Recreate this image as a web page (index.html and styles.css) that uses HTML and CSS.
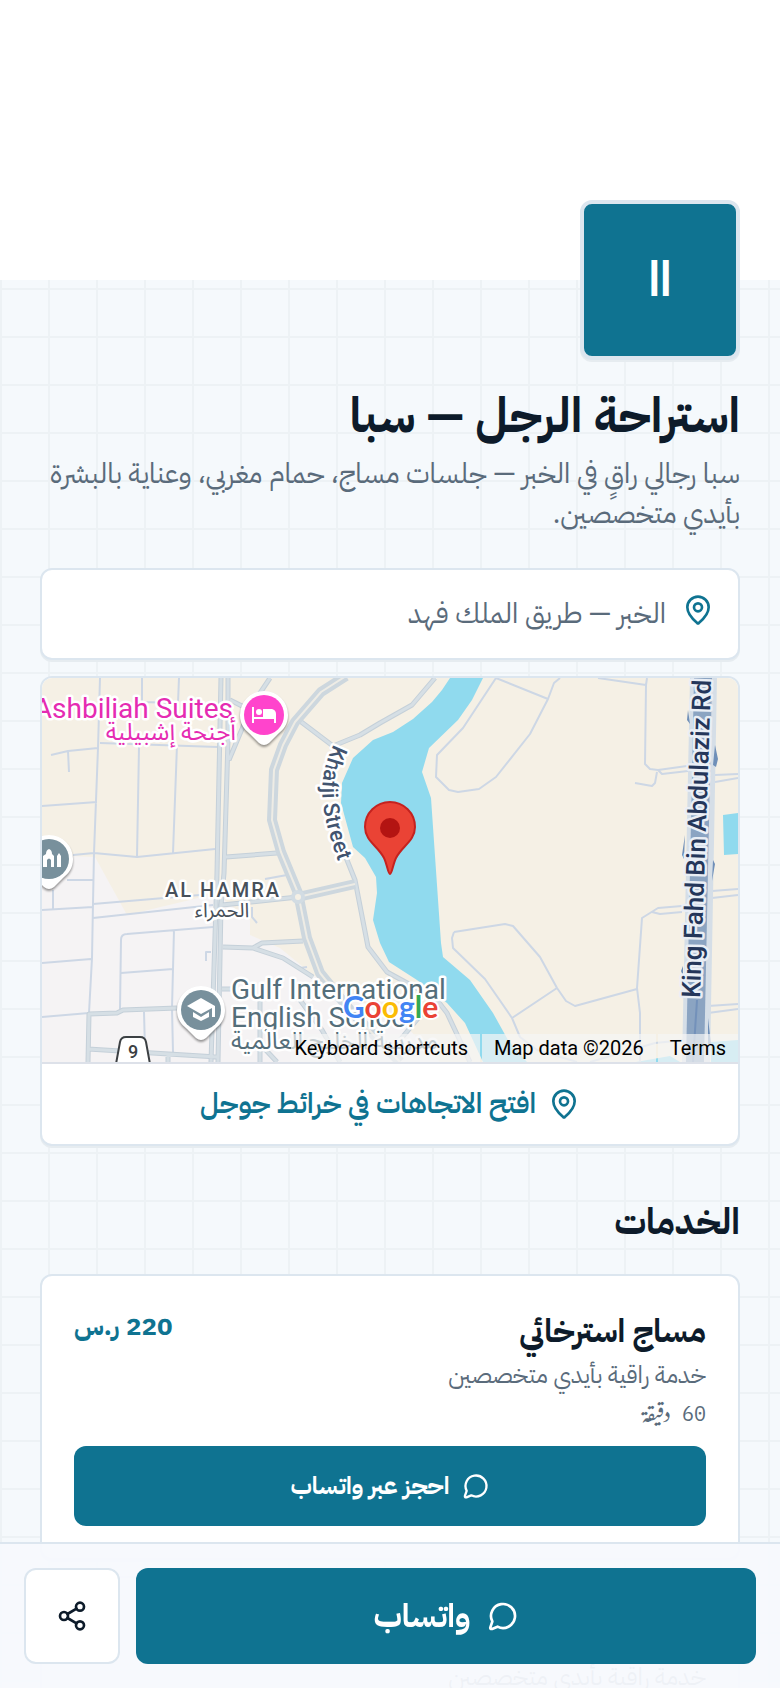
FILE: index.html
```html
<!DOCTYPE html>
<html lang="ar" dir="rtl">
<head>
    <meta charset="UTF-8">
    <meta name="viewport" content="width=device-width, initial-scale=1.0">
    <title>استراحة الرجل — سبا</title>
    <link rel="stylesheet" href="styles.css">
</head>
<body>
    <svg class="icon-defs" width="0" height="0" aria-hidden="true">
        <symbol id="icon-pin" viewBox="0 0 24 24">
            <path d="M20 10c0 5-5.500 10.200-7.400 11.800a1 1 0 0 1-1.200 0C9.500 20.200 4 15 4 10a8 8 0 0 1 16 0"/>
            <circle cx="12" cy="10" r="3"/>
        </symbol>
        <symbol id="icon-chat" viewBox="0 0 24 24">
            <path d="M7.900 20A9 9 0 1 0 4 16.100L2.500 20.500Q2.200 22 3.800 21.700Z"/>
        </symbol>
        <symbol id="icon-share" viewBox="0 0 24 24">
            <circle cx="18" cy="5" r="3"/>
            <circle cx="6" cy="12" r="3"/>
            <circle cx="18" cy="19" r="3"/>
            <path d="M8.600 13.500l6.800 4M15.400 6.500l-6.800 4"/>
        </symbol>
    </svg>

    <div class="cover"></div>
    <main class="content">
        <div class="logo">اا</div>
        <h1>استراحة الرجل — سبا</h1>
        <p class="about">سبا رجالي راقٍ في الخبر — جلسات مساج، حمام مغربي، وعناية بالبشرة بأيدي متخصصين.</p>

        <div class="card address">
            <svg class="icon"><use href="#icon-pin"/></svg>
            <span>الخبر — طريق الملك فهد</span>
        </div>

        <div class="card map-card">
            <div class="map">
                <svg class="map-canvas" viewBox="42 678 696 384" preserveAspectRatio="xMidYMid slice">
                    <defs>
                        <path id="khafji" d="M334 744C315 782 320 814 343 874"/>
                        <path id="marker" d="M0-24a24 24 0 0 1 24 24c0 9-4 14-10 19L5 28q-5 4-10 0l-9-9c-6-5-10-10-10-19A24 24 0 0 1 0-24z"/>
                    </defs>
                    <rect x="42" y="678" width="696" height="384" fill="#f5f0e5"/>
                    <path fill="#f5f3f4" d="M42 855L95 857 127 915 190 900 215 893 250 920V935L280 948 313 975 340 992 400 1020 440 1062H42z"/>

                    <g fill="#90daee">
                        <path d="M450 678L442 690 432 702 413 719 393 732 373 740 353 758 342 783 341 803 353 847 365 858 376 877 377 893 373 920 380 943 389 962 417 980 447 1003 465 1023 483 1062H527L508 1040 493 1013 470 980 443 957 441 943 431 798 422 772 429 748 458 720 472 700 483 678z"/>
                        <path d="M723 815L738 813V854L724 855zM636 1062L670 1056 680 1062zM711 1042L738 1040V1062H711z"/>
                    </g>

                    <g class="street">
                        <path d="M100 678L98 748 94 853 93 903 92 958 89 1013M142 678V702L178 703 179 678M51 755L68 751 98 748M68 751L69 772M100 743L218 747M139 747L137 857M177 745L173 853M42 806L97 802M73 855L94 853 137 857 215 849M67 880H93M53 890V909M42 910L93 907M93 904L200 895M93 918L213 905M42 963L91 959M42 1017L89 1013M120 1009L121 940Q121 934 127 934L213 927M121 973L173 969M174 930L172 1008 173 1052M144 1012L145 1050M211 952H206V961M265 879L287 875M252 907V917L257 923M307 967L300 968"/>
                        <path d="M496 678L463 728 437 755 436 777 449 790 458 792 479 789 496 777 530 734 548 699 554 683 560 678M496 678L548 699M598 678L646 685M647 678L646 685 645 764 650 769 658 770 662 774 688 771M658 770L687 766M657 772L655 783 652 786 635 783M715 775L738 774M715 782L738 778M712 891L738 889M712 898L738 895M708 1006L738 1004M708 1013L738 1009"/>
                        <path d="M454 932L505 924 513 926 540 957 557 988 566 1001 575 1006 637 989M454 932L452 938 453 948 485 979 512 1018 520 1037 537 1050 577 1062M512 1018L557 988M682 906L658 908 642 918 637 988 640 1013V1062M652 912L660 914 682 912M590 1062L655 1043 685 1040"/>
                    </g>

                    <g class="road-edge">
                        <path d="M221 678L217 873 216 905 211 1062M228 678V740L224 873 221 905 218 1062M270 678L252 705 229 760M230 700L242 706M300 721L333 746L360 735 380 723 412 705 435 678M226 857L277 853M298 897L222 905M345 855L355 880 368 947 387 972 420 990 437 1000 447 1013 470 1062M223 947L253 948 262 943 303 941M253 948L283 958 313 977M222 989H232M88 1062L89 1014 117 1013 123 1010 177 1008M88 1049L217 1057M168 1054V1062M300 1000L322 1030 340 1062M400 1040L425 1010M260 1000V1062M262 1046L277 1062"/>
                    </g>
                    <g class="road">
                        <path d="M221 678L217 873 216 905 211 1062M228 678V740L224 873 221 905 218 1062M270 678L252 705 229 760M230 700L242 706M300 721L333 746L360 735 380 723 412 705 435 678M226 857L277 853M298 897L222 905M345 855L355 880 368 947 387 972 420 990 437 1000 447 1013 470 1062M223 947L253 948 262 943 303 941M253 948L283 958 313 977M222 989H232M88 1062L89 1014 117 1013 123 1010 177 1008M88 1049L217 1057M168 1054V1062M300 1000L322 1030 340 1062M400 1040L425 1010M260 1000V1062M262 1046L277 1062"/>
                    </g>
                    <path class="avenue" d="M346 676L321 692 295 722 283 745 274 770 272 820 281 852 298 893 307 938 320 973 350 1010 400 1062M298 897L355 884"/>
                    <path class="avenue-line" d="M346 676L321 692 295 722 283 745 274 770 272 820 281 852 298 893 307 938 320 973 350 1010 400 1062M298 897L355 884"/>
                    <circle cx="298" cy="897" r="5" fill="#f5f0e5" stroke="#d2dce3" stroke-width="4"/>

                    <path d="M690 678H717L710 1062H682z" fill="#d5dee7"/>
                    <path d="M694 678H712L704 1062H686z" fill="#8ba4c2"/>
                    <path d="M688 710l2 14-3-4zM715 745l3 14-2 8-3-2zM685 835l-3 20 2 4zM713 860l2 4-3 17zM683 966l-2 5 2 5zM708 1018l3 26h-3z" fill="#6f8fb8"/>
                    <path d="M697 1000L693 1062" stroke="#7391ba" stroke-width="2"/>

                    <g class="shield">
                        <path d="M116 1064L120 1042Q121 1037 126 1037H140Q145 1037 146 1042L150 1064z"/>
                        <text x="133" y="1058">9</text>
                    </g>

                    <g class="marker pink" transform="translate(264 715)">
                        <use href="#marker"/>
                        <circle r="20"/>
                        <path d="M-12-8h2V2H-1V-6H8q4 1 4 5V8h-2V4h-20v4h-2z" fill="#fff"/>
                        <circle class="dot" cx="-5" cy="-3" r="3"/>
                    </g>
                    <g class="marker" transform="translate(49 859)">
                        <use href="#marker"/>
                        <circle r="20"/>
                        <path d="M-6 8V-3l3-2q0-4 3-5 3 1 3 5l2 2V8H2V1q-2-3-4 0v7zM8 8V-3l2-3 2 3V8z" fill="#fff"/>
                    </g>
                    <g class="marker" transform="translate(201 1010)">
                        <use href="#marker"/>
                        <circle r="20"/>
                        <path d="M0-12l14 8V7h-3V-2L0 4-14-4zM-8 2L0 7 8 2V7L0 11-8 7z" fill="#fff"/>
                    </g>

                    <g class="label place">
                        <text class="pink-text" x="233" y="718" text-anchor="end">Ashbiliah Suites</text>
                        <text class="pink-text small" x="236" y="740" text-anchor="end">أجنحة إشبيلية</text>
                        <text x="231" y="999">Gulf International</text>
                        <text x="231" y="1027">English School</text>
                        <text class="small gray-text" x="231" y="1049">مدرسة الخليج العالمية</text>
                    </g>
                    <g class="label area" text-anchor="middle">
                        <text class="caps" x="223" y="897">AL HAMRA</text>
                        <text class="sub" x="222" y="917">الحمراء</text>
                    </g>
                    <text class="label street-name"><textPath href="#khafji">Khafji Street</textPath></text>
                    <text class="label highway" transform="translate(700 998) rotate(-88)">King Fahd Bin Abdulaziz Rd</text>

                    <path d="M390 874C388 874 387 864 384 858 378 846 365 841 365 827A25 25 0 0 1 415 827C415 841 402 846 396 858 393 864 392 874 390 874z" fill="#ea4335" stroke="#c5221f" stroke-width="2"/>
                    <circle cx="390" cy="828" r="10" fill="#b31412"/>

                    <text class="google" x="343" y="1018"><tspan fill="#4285f4">G</tspan><tspan fill="#ea4335">o</tspan><tspan fill="#fbbc04">o</tspan><tspan fill="#4285f4">g</tspan><tspan fill="#34a853">l</tspan><tspan fill="#ea4335">e</tspan></text>
                </svg>
                <div class="map-footer">
                    <button type="button">Keyboard shortcuts</button>
                    <span>Map data ©2026</span>
                    <a href="#">Terms</a>
                </div>
            </div>
            <a class="directions" href="#">
                <svg class="icon"><use href="#icon-pin"/></svg>
                <span>افتح الاتجاهات في خرائط جوجل</span>
            </a>
        </div>

        <h2>الخدمات</h2>
        <div class="services">
            <article class="card service">
                <div class="service-head">
                    <h3>مساج استرخائي</h3>
                    <span class="price">220 ر.س</span>
                </div>
                <p class="service-text">خدمة راقية بأيدي متخصصين</p>
                <p class="duration">60 دقيقة</p>
                <button type="button" class="book">
                    <svg class="icon"><use href="#icon-chat"/></svg>
                    <span>احجز عبر واتساب</span>
                </button>
            </article>
            <article class="card service">
                <p class="service-text">خدمة راقية بأيدي متخصصين</p>
            </article>
        </div>
    </main>

    <div class="bottom-bar">
        <button type="button" class="whatsapp">
            <svg class="icon"><use href="#icon-chat"/></svg>
            <span>واتساب</span>
        </button>
        <button type="button" class="share" aria-label="مشاركة">
            <svg class="icon"><use href="#icon-share"/></svg>
        </button>
    </div>
</body>
</html>
```
FILE: styles.css
```css
* {
    box-sizing: border-box;
}
body {
    margin: 0;
    padding-bottom: 146px;
    font-family: "IBM Plex Sans Arabic", "Noto Sans Arabic", sans-serif;
    color: #0d1b2a;
    background-color: #f5f9fc;
    background-image:
        linear-gradient(to right, #edf2f5 2px, transparent 2px),
        linear-gradient(to bottom, #edf2f5 2px, transparent 2px);
    background-size: 48px 48px;
}
h1, h2, h3, p {
    margin: 0;
}
button {
    font-family: inherit;
    cursor: pointer;
}
a {
    text-decoration: none;
}
.icon-defs {
    position: absolute;
}
.icon {
    flex: none;
    width: 32px;
    height: 32px;
    fill: none;
    stroke: currentColor;
    stroke-width: 2;
    stroke-linecap: round;
    stroke-linejoin: round;
}
.cover {
    height: 280px;
    background: #fff;
}
.content {
    padding: 0 40px;
}
.logo {
    display: flex;
    align-items: center;
    justify-content: center;
    position: relative;
    width: 160px;
    height: 160px;
    margin-top: -80px;
    border: 4px solid #dce6ef;
    border-radius: 12px;
    background: #0f7391;
    box-shadow: 0 2px 0 #e6ecf0;
    color: #fff;
    font-size: 48px;
    font-weight: 700;
}
h1 {
    margin-top: 26px;
    font-size: 48px;
    line-height: 60px;
}
.about {
    margin-top: 8px;
    color: #5a6b7b;
    font-size: 28px;
    line-height: 40px;
}
.card {
    border: 2px solid #dce6ef;
    border-radius: 12px;
    background: #fff;
    box-shadow: 0 2px 0 #e6ecf0;
}
.address {
    display: flex;
    gap: 16px;
    margin-top: 34px;
    padding: 24px;
    color: #5a6b7b;
    font-size: 28px;
    line-height: 40px;
}
.address .icon, .directions {
    color: #0f7391;
}
.map-card {
    margin-top: 16px;
    overflow: hidden;
}
.map {
    position: relative;
    height: 384px;
    direction: ltr;
}
.map-canvas {
    display: block;
    width: 100%;
    height: 100%;
    font-family: Roboto, "Noto Sans Arabic", sans-serif;
}
.street, .road, .road-edge, .avenue, .avenue-line {
    fill: none;
    stroke-linejoin: round;
}
.street {
    stroke: #cdd7e5;
    stroke-width: 2;
}
.road-edge {
    stroke: #c5d0d9;
    stroke-width: 5;
}
.road {
    stroke: #d6dfe5;
    stroke-width: 3;
}
.avenue {
    stroke: #cdd7de;
    stroke-width: 10;
}
.avenue-line {
    stroke: #eeece5;
    stroke-width: 2;
}
.shield path {
    fill: #fff;
    stroke: #3c4043;
    stroke-width: 2;
}
.shield text {
    fill: #3c4043;
    font-size: 18px;
    font-weight: 500;
    text-anchor: middle;
}
.marker {
    filter: drop-shadow(0 2px 1px rgba(0, 0, 0, 0.4));
}
.marker use {
    fill: #fff;
}
.marker circle {
    fill: #78909c;
}
.marker.pink circle {
    fill: #ff44cc;
}
.marker.pink .dot {
    fill: #fff;
}
.label {
    fill: #546e7a;
    stroke: #fff;
    stroke-width: 5px;
    stroke-linejoin: round;
    paint-order: stroke;
}
.place {
    font-size: 28px;
}
.place .small {
    font-size: 24px;
}
.place .pink-text {
    fill: #e52bb2;
}
.area {
    fill: #47505a;
    font-size: 20px;
}
.area .caps {
    font-weight: 500;
    letter-spacing: 2px;
}
.street-name {
    fill: #42546f;
    font-size: 22px;
    font-weight: 500;
}
.highway {
    fill: #24365a;
    stroke: #e9eef5;
    font-size: 26px;
    font-weight: 500;
}
.google {
    font-family: Lato, sans-serif;
    font-size: 30px;
    font-weight: 700;
    stroke: #fff;
    stroke-width: 4px;
    stroke-linejoin: round;
    paint-order: stroke;
}
.map-footer {
    display: flex;
    gap: 2px;
    position: absolute;
    right: 0;
    bottom: 0;
    font-family: Roboto, sans-serif;
    font-size: 20px;
    line-height: 28px;
}
.map-footer > * {
    padding: 0 12px;
    border: 0;
    background: rgba(245, 245, 245, 0.7);
    color: #000;
    font: inherit;
}
.map-footer button {
    padding-left: 4px;
}
.directions {
    display: flex;
    align-items: center;
    justify-content: center;
    gap: 12px;
    height: 82px;
    border-top: 2px solid #dde1e9;
    font-size: 28px;
    font-weight: 600;
    line-height: 40px;
}
h2 {
    margin-top: 50px;
    font-size: 36px;
    line-height: 52px;
}
.services {
    display: grid;
    gap: 16px;
    margin-top: 26px;
}
.service {
    padding: 32px;
}
.service:last-child {
    padding-top: 78px;
}
.service-head {
    display: flex;
    justify-content: space-between;
}
h3 {
    font-size: 32px;
    line-height: 46px;
}
.price {
    color: #0f7391;
    font-size: 26px;
    font-weight: 700;
    line-height: 38px;
}
.service-text {
    color: #5a6b7b;
    font-size: 24px;
    line-height: 42px;
}
.duration {
    height: 36px;
    color: #5a6b7b;
    font-family: "IBM Plex Mono", "Noto Nastaliq Urdu", monospace;
    font-size: 20px;
    line-height: 36px;
}
.book, .whatsapp {
    display: flex;
    align-items: center;
    justify-content: center;
    border: 0;
    border-radius: 12px;
    background: #0f7391;
    color: #fff;
    font-weight: 700;
}
.book {
    gap: 12px;
    width: 100%;
    height: 80px;
    margin-top: 14px;
    font-size: 24px;
}
.book .icon {
    width: 28px;
    height: 28px;
}
.bottom-bar {
    display: flex;
    gap: 16px;
    position: fixed;
    right: 0;
    bottom: 0;
    left: 0;
    padding: 24px;
    border-top: 2px solid #dce6ef;
    background: rgba(247, 249, 253, 0.95);
}
.whatsapp {
    flex: 1;
    gap: 16px;
    height: 96px;
    font-size: 32px;
}
.share {
    display: flex;
    align-items: center;
    justify-content: center;
    width: 96px;
    height: 96px;
    border: 2px solid #dce6ef;
    border-radius: 12px;
    background: #fff;
    color: #0d1b2a;
}
```
